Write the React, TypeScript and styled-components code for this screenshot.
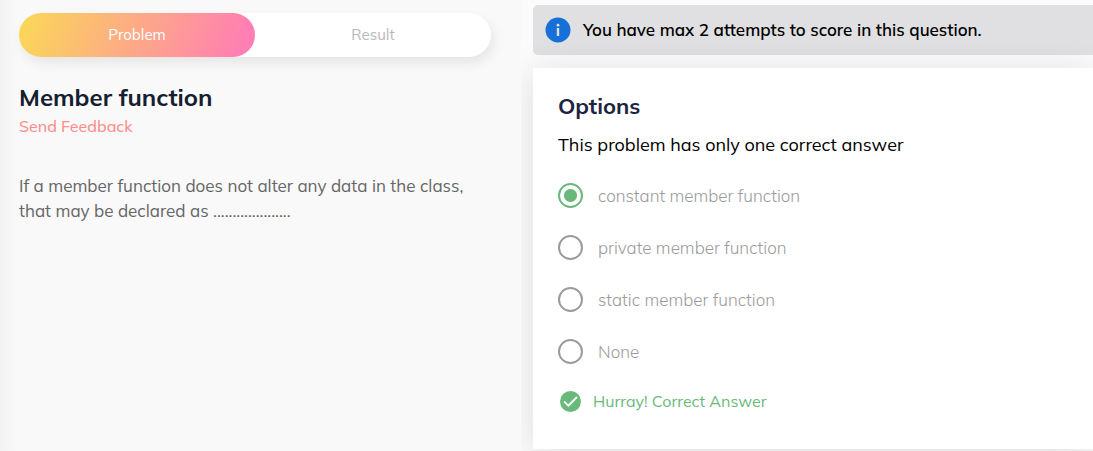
import React, { useState } from "react";
import styled, { createGlobalStyle, css } from "styled-components";

const GlobalStyle = createGlobalStyle`
  *, *::before, *::after { box-sizing: border-box; }
  body {
    margin: 0;
    background: #fbfbfb;
    color: #000;
    font-family: Mulish, Muli, "Open Sans", sans-serif;
    font-size: 16px;
  }
  h1, h2, p { margin: 0; }
`;

const Page = styled.div`
  display: grid;
  grid-template-columns: minmax(0, 521fr) minmax(0, 560fr);
  gap: 12px;
  min-height: 100vh;
  overflow: hidden;
`;

const ProblemPane = styled.section`
  position: relative;
  z-index: 1;
  padding: 13px 30px 24px 19px;
  background: linear-gradient(90deg, #f2f2f2, #f9f9f9 18px);
`;

const TabBar = styled.div`
  display: flex;
  border-radius: 22px;
  background: #fff;
  box-shadow: 3px 6px 12px rgba(0, 0, 0, 0.08);
`;

const Tab = styled.button<{ $active: boolean }>`
  flex: 1;
  height: 44px;
  padding: 0 0 2px;
  border: 0;
  border-radius: 22px;
  background: transparent;
  color: #b9b9b9;
  font: inherit;
  font-size: 15px;
  cursor: pointer;
  ${(p) =>
    p.$active &&
    css`
      background: linear-gradient(110deg, #fad956, #ff7eb3 94%);
      color: #fff;
    `}
`;

const Title = styled.h1`
  margin-top: 24px;
  color: #14202f;
  font-size: 24px;
  line-height: 32px;
  font-weight: 700;
`;

const FeedbackLink = styled.a`
  display: inline-block;
  color: #ff8f8c;
  font-size: 16px;
  line-height: 26px;
  font-weight: 500;
  text-decoration: none;
`;

const Statement = styled.p`
  margin-top: 34px;
  color: #666;
  font-size: 17px;
  line-height: 25px;
`;

const AnswerPane = styled.section`
  display: flex;
  flex-direction: column;
  gap: 13px;
  padding-top: 5px;
`;

const Notice = styled.div`
  display: flex;
  align-items: center;
  gap: 12px;
  min-height: 50px;
  padding: 0 12px;
  border-radius: 5px 0 0 5px;
  background: #e0e0e2;
  font-size: 17px;
  line-height: 24px;
  font-weight: 600;
`;

const InfoIcon = styled.svg`
  flex: none;
  width: 26px;
  height: 26px;
`;

const Card = styled.div`
  padding: 24px 25px 36px;
  background: #fff;
  box-shadow: 0 4px 34px rgba(0, 0, 0, 0.12);
`;

const CardTitle = styled.h2`
  color: #1b2540;
  font-size: 22px;
  line-height: 28px;
  font-weight: 700;
`;

const Hint = styled.p`
  margin-top: 13px;
  font-size: 18px;
  line-height: 24px;
`;

const Options = styled.fieldset`
  display: flex;
  flex-direction: column;
  gap: 27px;
  margin: 26px 0 0;
  padding: 0;
  border: 0;
`;

const Option = styled.label`
  display: flex;
  align-items: center;
  gap: 15px;
  min-height: 25px;
  color: #9b9b9b;
  font-size: 17px;
  line-height: 24px;
  font-weight: 300;
  cursor: pointer;
`;

const Radio = styled.input`
  appearance: none;
  flex: none;
  width: 25px;
  height: 25px;
  margin: 0;
  border: 2px solid #9b9b9b;
  border-radius: 50%;
  background: #fff;
  cursor: pointer;
  &:checked {
    border-color: #69b97b;
    background: radial-gradient(circle, #69b97b 6px, #fff 7px);
  }
`;

const Verdict = styled.p`
  display: flex;
  align-items: center;
  gap: 12px;
  margin-top: 25px;
  padding-left: 2px;
  color: #69b97b;
  font-size: 16px;
  line-height: 24px;
`;

const CheckIcon = styled.svg`
  flex: none;
  width: 21px;
  height: 21px;
`;

const tabs = ["Problem", "Result"];
const choices = [
  "constant member function",
  "private member function",
  "static member function",
  "None",
];

export default function App() {
  const [tab, setTab] = useState(tabs[0]);
  const [choice, setChoice] = useState(choices[0]);

  return (
    <>
      <GlobalStyle />
      <Page>
        <ProblemPane>
          <TabBar>
            {tabs.map((name) => (
              <Tab key={name} $active={name === tab} onClick={() => setTab(name)}>
                {name}
              </Tab>
            ))}
          </TabBar>
          <Title>Member function</Title>
          <FeedbackLink href="#feedback">Send Feedback</FeedbackLink>
          <Statement>
            If a member function does not alter any data in the class, that may be
            declared as ....................
          </Statement>
        </ProblemPane>
        <AnswerPane>
          <Notice>
            <InfoIcon viewBox="0 0 26 26" aria-hidden="true">
              <circle cx="13" cy="13" r="12.5" fill="#1670d7" />
              <circle cx="13" cy="8.2" r="1.4" fill="#e0e0e2" />
              <rect x="11.8" y="11" width="2.4" height="8" fill="#e0e0e2" />
            </InfoIcon>
            You have max 2 attempts to score in this question.
          </Notice>
          <Card>
            <CardTitle>Options</CardTitle>
            <Hint id="hint">This problem has only one correct answer</Hint>
            <Options aria-labelledby="hint">
              {choices.map((name) => (
                <Option key={name}>
                  <Radio
                    type="radio"
                    name="answer"
                    checked={name === choice}
                    onChange={() => setChoice(name)}
                  />
                  {name}
                </Option>
              ))}
            </Options>
            <Verdict>
              <CheckIcon viewBox="0 0 21 21" aria-hidden="true">
                <circle cx="10.5" cy="10.5" r="10.5" fill="#69b97b" />
                <path
                  d="M4 10.4 8.4 14.6 17 6"
                  fill="none"
                  stroke="#fff"
                  strokeWidth="2"
                />
              </CheckIcon>
              Hurray! Correct Answer
            </Verdict>
          </Card>
        </AnswerPane>
      </Page>
    </>
  );
}
